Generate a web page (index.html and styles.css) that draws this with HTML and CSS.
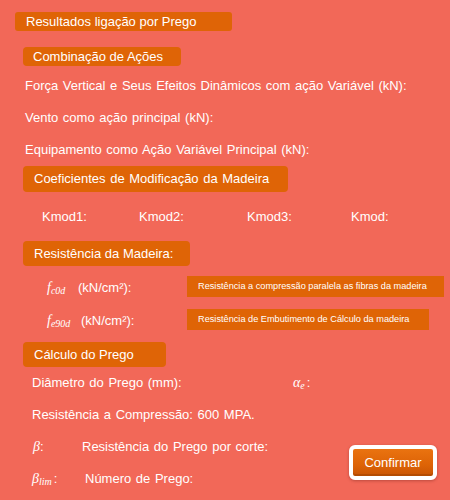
FILE: index.html
```html
<!DOCTYPE html>
<html lang="pt">
<head>
<meta charset="utf-8">
<title>Resultados ligação por Prego</title>
<link rel="stylesheet" href="styles.css">
</head>
<body>
<main class="page">
  <div class="title">Resultados ligação por Prego</div>

  <div class="head head-comb">Combinação de Ações</div>
  <div class="line">Força Vertical e Seus Efeitos Dinâmicos com ação Variável (kN):</div>
  <div class="line">Vento como ação principal (kN):</div>
  <div class="line">Equipamento como Ação Variável Principal (kN):</div>

  <div class="head head-coef">Coeficientes de Modificação da Madeira</div>
  <div class="kmods">
    <span class="k k1">Kmod1:</span>
    <span class="k k2">Kmod2:</span>
    <span class="k k3">Kmod3:</span>
    <span class="k">Kmod:</span>
  </div>

  <div class="head head-res">Resistência da Madeira:</div>
  <div class="frow frow1">
    <span class="flabel"><span class="math fsym1">f<sub>c0d</sub></span>(kN/cm²):</span>
    <span class="note note1">Resistência a compressão paralela as fibras da madeira</span>
  </div>
  <div class="frow frow2">
    <span class="flabel"><span class="math fsym2">f<sub>e90d</sub></span>(kN/cm²):</span>
    <span class="note note2">Resistência de Embutimento de Cálculo da madeira</span>
  </div>

  <div class="head head-calc">Cálculo do Prego</div>
  <div class="line line-calc">
    <span class="diam">Diâmetro do Prego (mm):</span><span class="math">α<sub>e</sub></span><span class="colon">:</span>
  </div>
  <div class="line line-calc">Resistência a Compressão: 600 MPA.</div>
  <div class="bottom">
    <div class="bcol">
      <div class="line line-beta"><span class="bsym bsym1"><span class="math">β</span>:</span>Resistência do Prego por corte:</div>
      <div class="line line-blim"><span class="bsym bsym2"><span class="math">β<sub>lim</sub></span><span class="colon">:</span></span>Número de Prego:</div>
    </div>
    <button class="confirm" type="button">Confirmar</button>
  </div>
</main>
</body>
</html>
```

FILE: styles.css
```css
html, body {
  margin: 0;
  padding: 0;
}
body {
  background: #f26858;
  color: #ffffff;
  font-family: "Liberation Sans", Arial, sans-serif;
  font-size: 13px;
  width: 450px;
  height: 500px;
  overflow: hidden;
}
.page {
  padding-top: 12px;
}
.title {
  margin-left: 15px;
  width: 217px;
  height: 19px;
  line-height: 19px;
  box-sizing: border-box;
  padding-left: 11px;
  background: #df6406;
  border-radius: 3px;
}
.head {
  margin-left: 23px;
  box-sizing: border-box;
  padding-left: 11px;
  background: #df6406;
  border-radius: 4px;
  font-size: 13px;
  white-space: nowrap;
}
.head-comb {
  margin-top: 16px;
  width: 158px;
  height: 19px;
  line-height: 19px;
  padding-left: 10px;
  margin-bottom: 4px;
}
.line {
  height: 32px;
  line-height: 32px;
  margin-left: 25px;
  white-space: nowrap;
  word-spacing: 1px;
}
.head-coef {
  width: 265px;
  height: 26px;
  line-height: 26px;
  word-spacing: 1px;
}
.kmods {
  display: flex;
  height: 49px;
  align-items: center;
  padding-left: 42px;
}
.k1 { width: 97px; }
.k2 { width: 108px; }
.k3 { width: 104px; }
.head-res {
  width: 167px;
  height: 25px;
  line-height: 25px;
}
.frow {
  display: flex;
  align-items: center;
  height: 21px;
}
.frow1 { margin-top: 10px; }
.frow2 { margin-top: 12px; }
.flabel {
  margin-left: 47px;
  width: 140px;
  padding-top: 3px;
  white-space: nowrap;
}
.fsym1 { display: inline-block; width: 31px; }
.fsym2 { display: inline-block; width: 34px; }
.note {
  background: #df6406;
  height: 21px;
  line-height: 21px;
  box-sizing: border-box;
  padding-left: 11px;
  font-size: 9.2px;
  white-space: nowrap;
}
.note1 { width: 257px; }
.note2 { width: 242px; }
.math {
  font-family: "Liberation Serif", "Times New Roman", serif;
  font-style: italic;
  font-size: 14px;
}
.math sub {
  font-size: 10px;
  vertical-align: -2px;
  line-height: 0;
}
.head-calc {
  margin-top: 12px;
  width: 143px;
  height: 25px;
  line-height: 25px;
}
.line-calc {
  margin-left: 32px;
}
.diam {
  display: inline-block;
  width: 261px;
}
.colon {
  margin-left: 2px;
}
.bottom {
  display: flex;
  justify-content: space-between;
  align-items: center;
}
.line-beta { margin-left: 33px; }
.line-blim { margin-left: 32px; }
.bsym { display: inline-block; }
.bsym1 { width: 49px; }
.bsym2 { width: 53px; }
.confirm {
  margin-right: 13px;
  margin-top: -2px;
  width: 88px;
  height: 35px;
  box-sizing: border-box;
  border: 4px solid #ffffff;
  border-radius: 6px;
  background: linear-gradient(#ea7310, #dd6306 60%, #c85504);
  box-shadow: inset 0 -2px 0 #b44c02, 0 1px 3px rgba(120, 40, 30, 0.45);
  color: #ffffff;
  font-family: "Liberation Sans", Arial, sans-serif;
  font-size: 13px;
  padding: 0;
  cursor: pointer;
}
```
